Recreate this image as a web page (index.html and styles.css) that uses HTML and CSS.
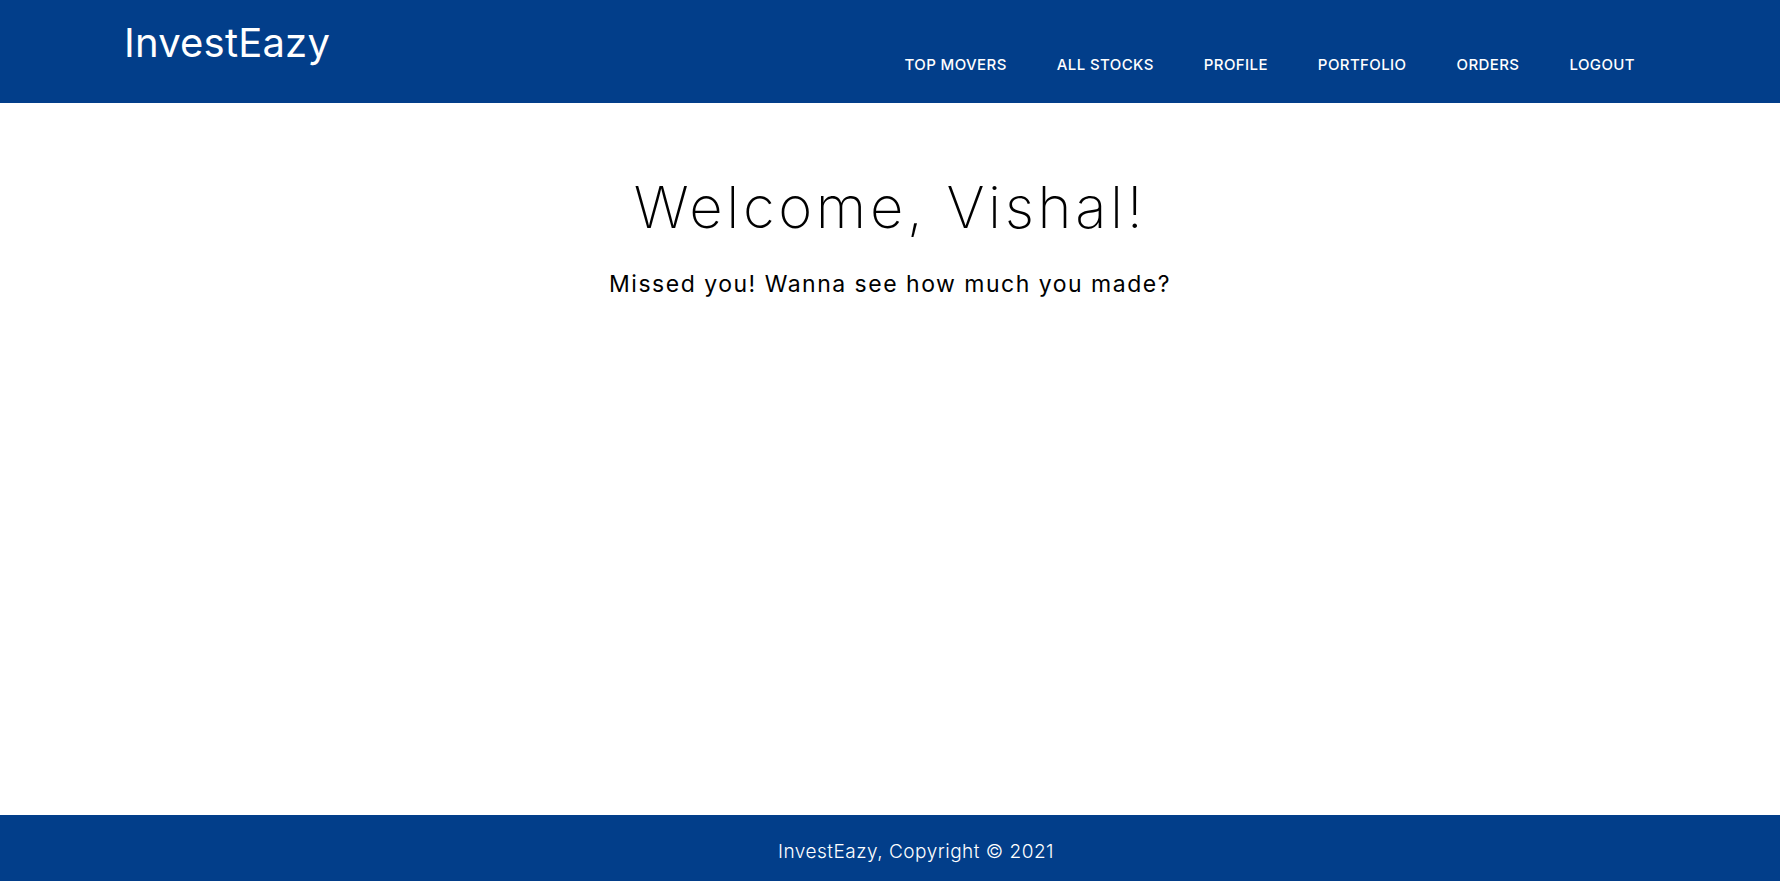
FILE: index.html
```html
<!DOCTYPE html>
<html lang="en">
<head>
<meta charset="utf-8">
<title>InvestEazy</title>
<link rel="stylesheet" href="styles.css">
</head>
<body>
<div class="page">
  <header class="topbar">
    <a class="brand" href="#">InvestEazy</a>
    <nav class="nav">
      <a href="#">TOP MOVERS</a>
      <a href="#">ALL STOCKS</a>
      <a href="#">PROFILE</a>
      <a href="#">PORTFOLIO</a>
      <a href="#">ORDERS</a>
      <a href="#">LOGOUT</a>
    </nav>
  </header>
  <main class="content">
    <h1 class="welcome">Welcome, Vishal!</h1>
    <p class="tagline">Missed you! Wanna see how much you made?</p>
  </main>
  <footer class="footer">InvestEazy, Copyright © 2021</footer>
</div>
</body>
</html>
```
FILE: styles.css
```css
html, body {
  margin: 0;
  padding: 0;
  height: 100%;
}
body {
  font-family: Inter, "Open Sans", sans-serif;
  color: #000;
  background: #fff;
}
.page {
  min-height: 100vh;
  display: flex;
  flex-direction: column;
}
.topbar {
  background: #023e8a;
  height: 103px;
  box-sizing: border-box;
  display: flex;
  justify-content: space-between;
  align-items: flex-start;
  padding: 0 120px 0 124px;
}
.brand {
  color: #fff;
  text-decoration: none;
  font-size: 40px;
  font-weight: 400;
  letter-spacing: 0.2px;
  line-height: 1;
  margin-top: 23px;
}
.nav {
  display: flex;
  margin-top: 55px;
}
.nav a {
  color: #fff;
  text-decoration: none;
  font-size: 15px;
  font-weight: 500;
  letter-spacing: 0.4px;
  padding: 0 25px;
  line-height: 20px;
}
.content {
  flex: 1;
  display: flex;
  flex-direction: column;
  align-items: center;
}
.welcome {
  margin: 68px 0 0;
  font-size: 58px;
  font-weight: 200;
  letter-spacing: 3.6px;
  line-height: 72px;
}
.tagline {
  margin: 26px 0 0;
  font-size: 23px;
  font-weight: 400;
  letter-spacing: 1.5px;
  line-height: 30px;
}
.footer {
  background: #023e8a;
  color: #fff;
  height: 66px;
  box-sizing: border-box;
  display: flex;
  align-items: center;
  justify-content: center;
  padding: 6px 0 0 52px;
  font-size: 19px;
  font-weight: 300;
  letter-spacing: 0.5px;
}
```
